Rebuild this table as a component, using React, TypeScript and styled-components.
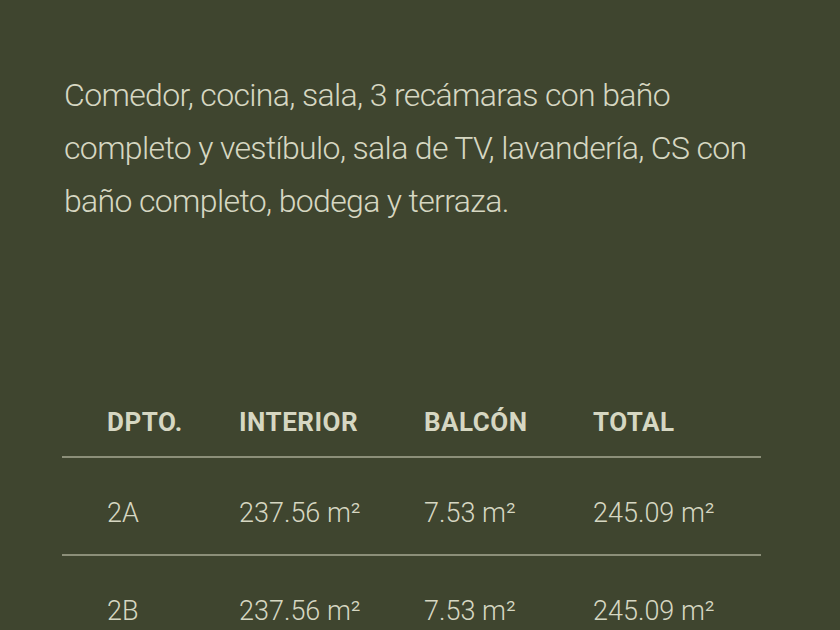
import React from "react";
import styled, { createGlobalStyle } from "styled-components";

const GlobalStyle = createGlobalStyle`
  html, body {
    margin: 0;
    padding: 0;
    background-color: #3f452f;
  }
`;

const Page = styled.div`
  width: 840px;
  height: 630px;
  overflow: hidden;
  box-sizing: border-box;
  padding: 69px 79px 0 62px;
  background-color: #3f452f;
  color: #d6d7c2;
  font-family: Roboto, "Liberation Sans", sans-serif;
`;

const Description = styled.p`
  margin: 0 0 178px 2px;
  font-size: 32px;
  line-height: 53px;
  font-weight: 300;
  letter-spacing: -0.65px;
`;

const Table = styled.div`
  display: flex;
  flex-flow: column;
`;

const Row = styled.div<{ $head?: boolean }>`
  display: grid;
  grid-template-columns: 132px 185px 169px 1fr;
  padding: ${(p) => (p.$head ? "0 0 18px 45px" : "39px 0 25px 45px")};
  border-bottom: 2px solid #8c8f79;
  font-size: ${(p) => (p.$head ? "26px" : "27px")};
  line-height: 32px;
  font-weight: ${(p) => (p.$head ? 700 : 300)};
  letter-spacing: ${(p) => (p.$head ? "0.5px" : "0")};
`;

const Cell = styled.span`
  white-space: nowrap;
`;

const units = [
  { dpto: "2A", interior: "237.56", balcon: "7.53", total: "245.09" },
  { dpto: "2B", interior: "237.56", balcon: "7.53", total: "245.09" },
];

export default function App() {
  return (
    <Page>
      <GlobalStyle />
      <Description>
        Comedor, cocina, sala, 3 recámaras con baño completo y vestíbulo, sala
        de TV, lavandería, CS con baño completo, bodega y terraza.
      </Description>
      <Table>
        <Row $head>
          <Cell>DPTO.</Cell>
          <Cell>INTERIOR</Cell>
          <Cell>BALCÓN</Cell>
          <Cell>TOTAL</Cell>
        </Row>
        {units.map((u) => (
          <Row key={u.dpto}>
            <Cell>{u.dpto}</Cell>
            <Cell>{u.interior} m²</Cell>
            <Cell>{u.balcon} m²</Cell>
            <Cell>{u.total} m²</Cell>
          </Row>
        ))}
      </Table>
    </Page>
  );
}
